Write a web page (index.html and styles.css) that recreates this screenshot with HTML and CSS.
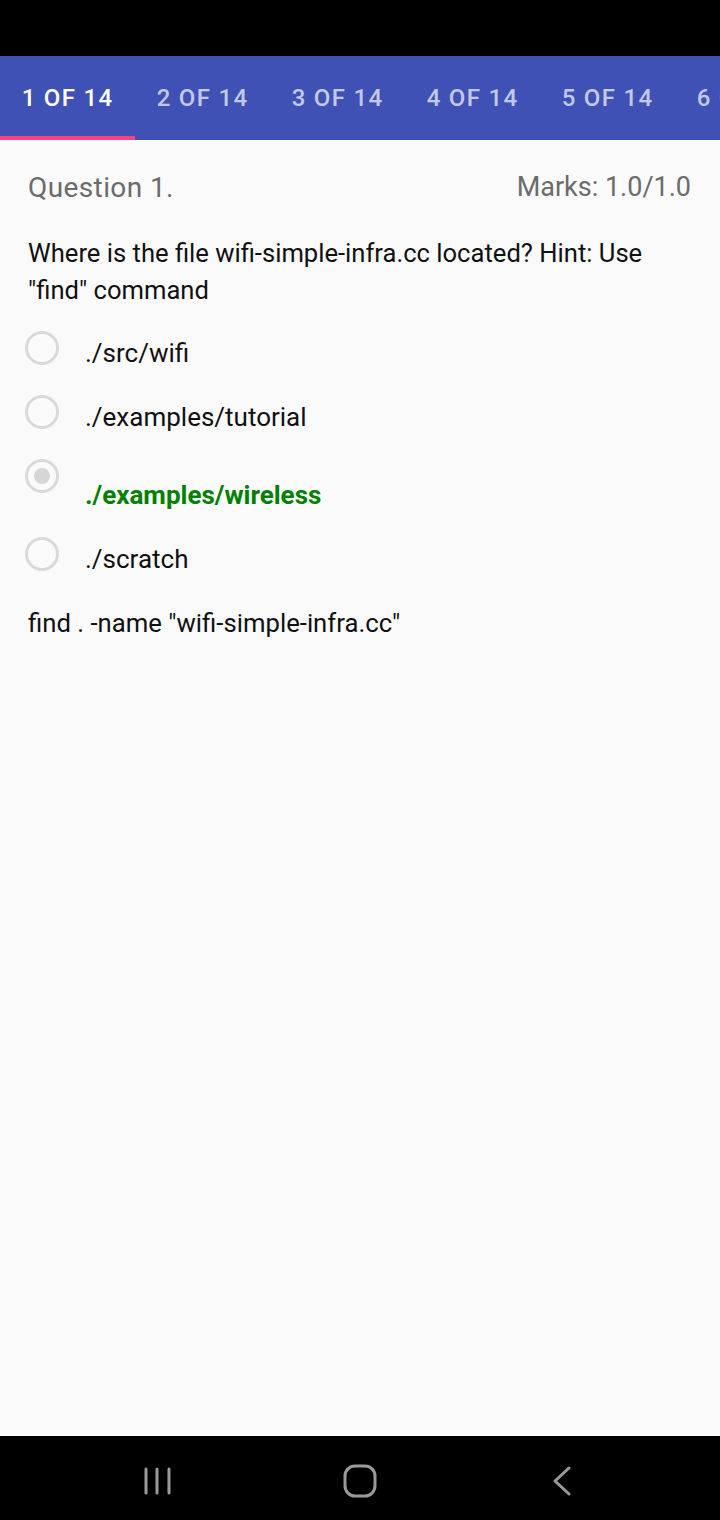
FILE: index.html
```html
<!DOCTYPE html>
<html>
<head>
<meta charset="utf-8">
<link rel="stylesheet" href="styles.css">
</head>
<body>
<div class="screen">
  <div class="statusbar"></div>
  <div class="tabs">
    <div class="tab active">1 OF 14</div>
    <div class="tab">2 OF 14</div>
    <div class="tab">3 OF 14</div>
    <div class="tab">4 OF 14</div>
    <div class="tab">5 OF 14</div>
    <div class="tab">6 OF 14</div>
  </div>
  <main class="content">
    <div class="qhead">
      <span class="qnum">Question 1.</span>
      <span class="marks">Marks: 1.0/1.0</span>
    </div>
    <p class="qtext">Where is the file wifi-simple-infra.cc located? Hint: Use "find" command</p>
    <div class="options">
      <div class="option"><span class="radio"></span><span class="label">./src/wifi</span></div>
      <div class="option"><span class="radio"></span><span class="label">./examples/tutorial</span></div>
      <div class="option"><span class="radio checked"></span><span class="label correct">./examples/wireless</span></div>
      <div class="option"><span class="radio"></span><span class="label">./scratch</span></div>
    </div>
    <p class="feedback">find . -name "wifi-simple-infra.cc"</p>
  </main>
  <nav class="navbar">
    <div class="navslot">
      <svg width="30" height="30" viewBox="0 0 30 30"><g stroke="#9a9a9a" stroke-width="3" stroke-linecap="round"><line x1="3" y1="3" x2="3" y2="27"/><line x1="14" y1="3" x2="14" y2="27"/><line x1="26" y1="3" x2="26" y2="27"/></g></svg>
    </div>
    <div class="navslot">
      <svg width="34" height="34" viewBox="0 0 34 34"><rect x="2" y="2" width="30" height="30" rx="10" fill="none" stroke="#9a9a9a" stroke-width="3"/></svg>
    </div>
    <div class="navslot">
      <svg width="22" height="30" viewBox="0 0 22 30"><polyline points="18,2 4,15 18,28" fill="none" stroke="#9a9a9a" stroke-width="3" stroke-linecap="round" stroke-linejoin="round"/></svg>
    </div>
  </nav>
</div>
</body>
</html>
```

FILE: styles.css
```css
* { box-sizing: border-box; }
html, body { margin: 0; padding: 0; }
body {
  font-family: Roboto, "Liberation Sans", sans-serif;
  background: #fafafa;
}
.screen {
  width: 720px;
  height: 1520px;
  display: flex;
  flex-direction: column;
  overflow: hidden;
  background: #fafafa;
}
.statusbar {
  height: 56px;
  background: #000;
  flex: none;
}
.tabs {
  height: 84px;
  flex: none;
  background: #3f51b5;
  display: flex;
  overflow: hidden;
}
.tab {
  flex: none;
  width: 135px;
  display: flex;
  align-items: center;
  justify-content: center;
  font-size: 24px;
  font-weight: 500;
  letter-spacing: 1.3px;
  color: rgba(255, 255, 255, 0.7);
  white-space: nowrap;
  padding-top: 4px;
  border-bottom: 4px solid transparent;
}
.tab.active {
  color: #fff;
  border-bottom-color: #ff4081;
}
.content {
  flex: 1;
  padding: 0 28px;
}
.qhead {
  display: flex;
  justify-content: space-between;
  align-items: center;
  margin-top: 29px;
  height: 36px;
  color: #6b6b6b;
}
.qnum {
  font-size: 28px;
  letter-spacing: 0.4px;
}
.marks {
  font-size: 27px;
  margin-right: 1px;
}
.qtext {
  margin: 30px 0 0;
  font-size: 25.6px;
  line-height: 37px;
  color: #111;
}
.options {
  display: flex;
  flex-direction: column;
  gap: 23px;
  margin-top: 22px;
}
.option {
  display: flex;
  align-items: flex-start;
}
.radio {
  flex: none;
  width: 34px;
  height: 34px;
  margin-left: -3px;
  border: 3px solid #d9d9d9;
  border-radius: 50%;
  display: flex;
  align-items: center;
  justify-content: center;
}
.radio.checked::after {
  content: "";
  width: 16px;
  height: 16px;
  border-radius: 50%;
  background: #d6d6d6;
}
.label {
  margin-left: 26px;
  padding-top: 4px;
  font-size: 26px;
  line-height: 37px;
  color: #111;
}
.label.correct {
  padding-top: 18px;
  color: #008000;
  font-weight: 700;
}
.feedback {
  margin: 27px 0 0;
  font-size: 25.7px;
  line-height: 37px;
  color: #111;
}
.navbar {
  height: 84px;
  flex: none;
  background: #000;
  display: flex;
  justify-content: center;
  align-items: center;
  padding-top: 6px;
}
.navslot {
  width: 202px;
  display: flex;
  justify-content: center;
  align-items: center;
}
```
